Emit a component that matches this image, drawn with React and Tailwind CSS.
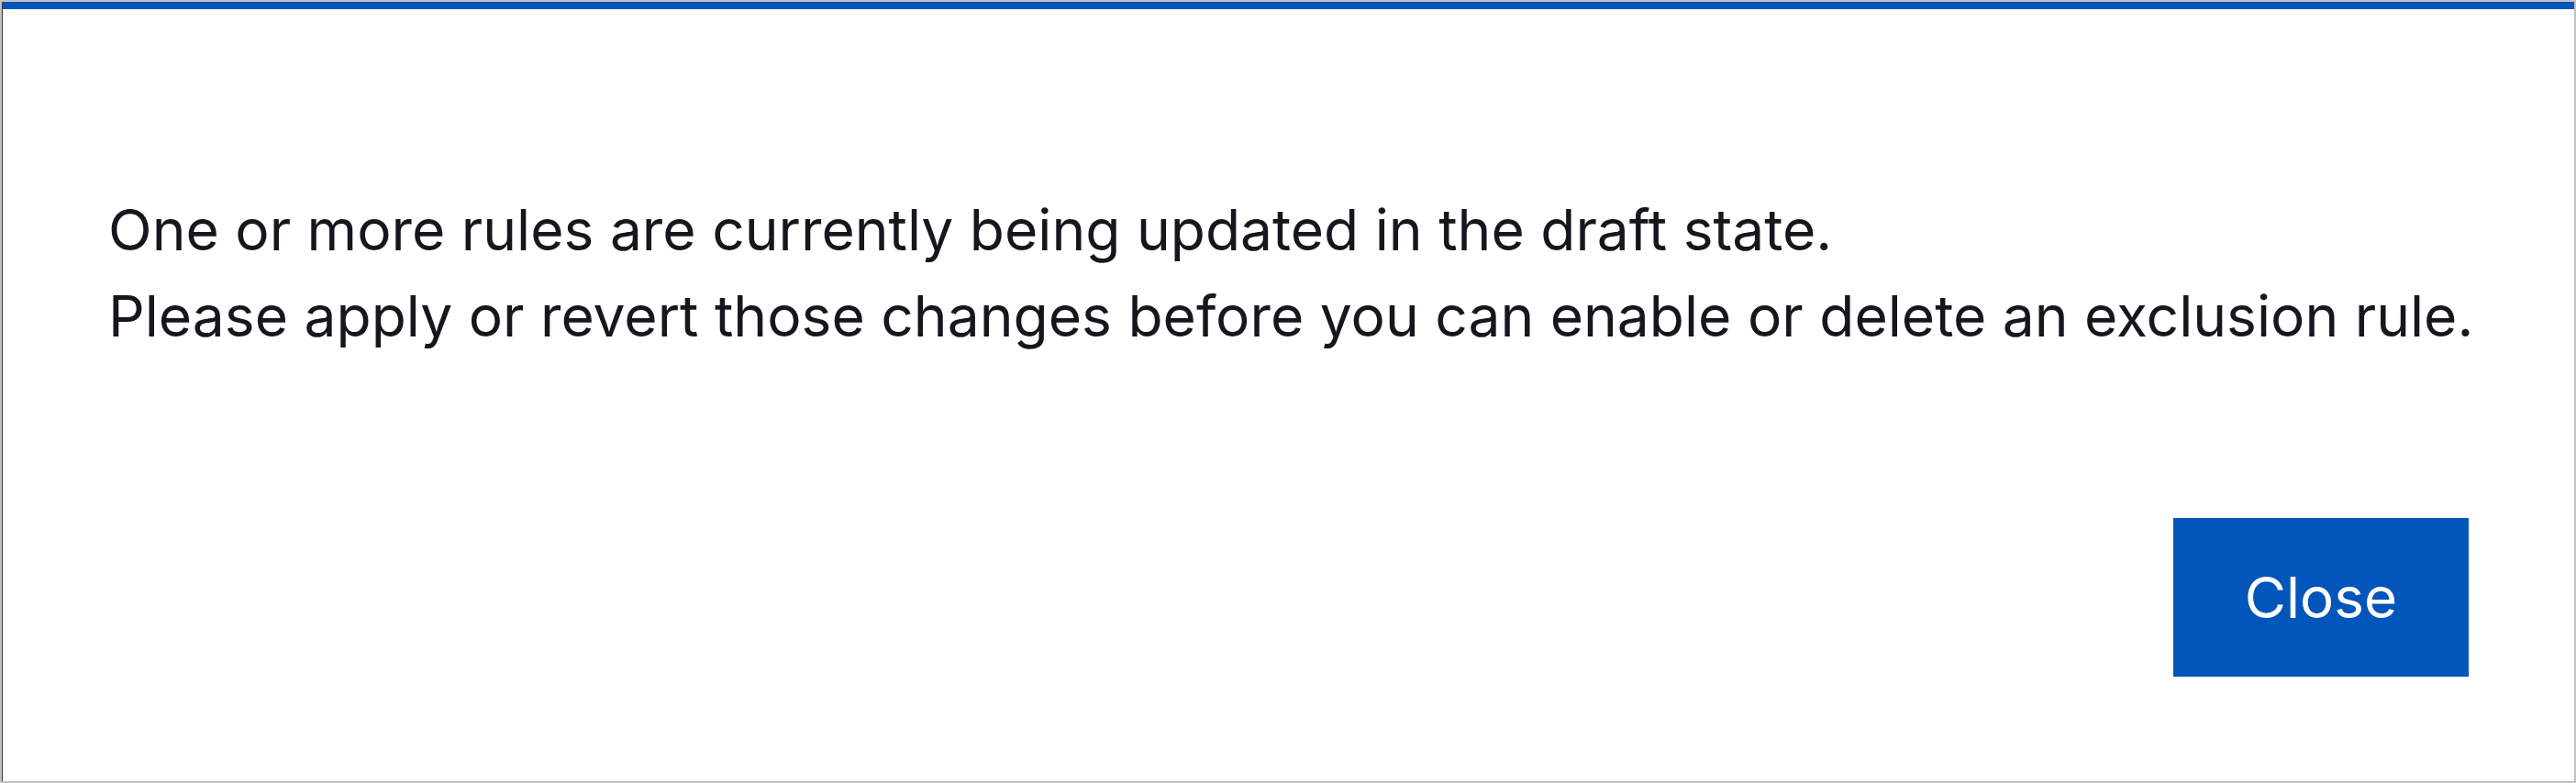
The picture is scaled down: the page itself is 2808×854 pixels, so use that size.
export default function App() {
  return (
    <div className="w-[2808px] h-[854px] bg-white border-2 border-[#c2c2c2] font-['Inter','Noto_Sans',sans-serif]">
      <div className="h-full border-l border-[#3a3a3a] flex flex-col">
        <div className="h-2 bg-[#0255b9]" />
        <div className="flex-1 flex flex-col px-[115px] pt-[194px] pb-[114px]">
          <div className="text-[62.3px] leading-[94px] text-[#16161c] whitespace-nowrap">
            <p>One or more rules are currently being updated in the draft state.</p>
            <p>Please apply or revert those changes before you can enable or delete an exclusion rule.</p>
          </div>
          <div className="mt-auto flex justify-end">
            <button className="w-[322px] h-[173px] bg-[#0255b9] text-white text-[62px]">
              Close
            </button>
          </div>
        </div>
      </div>
    </div>
  );
}
